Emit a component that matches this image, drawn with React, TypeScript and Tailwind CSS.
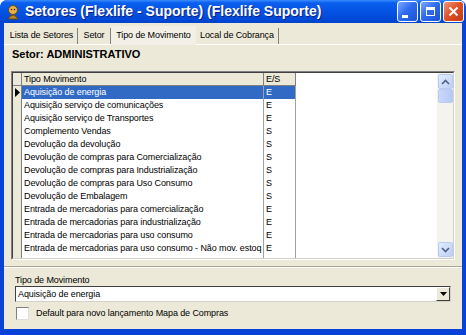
import React from 'react'

const rows: [string, string][] = [
  ['Aquisição de energia', 'E'],
  ['Aquisição serviço de comunicações', 'E'],
  ['Aquisição serviço de Transportes', 'E'],
  ['Complemento Vendas', 'S'],
  ['Devolução da devolução', 'S'],
  ['Devolução de compras para Comercialização', 'S'],
  ['Devolução de compras para Industrialização', 'S'],
  ['Devolução de compras para Uso Consumo', 'S'],
  ['Devolução de Embalagem', 'S'],
  ['Entrada de mercadorias para comercialização', 'E'],
  ['Entrada de mercadorias para industrialização', 'E'],
  ['Entrada de mercadorias para uso consumo', 'E'],
  ['Entrada de mercadorias para uso consumo - Não mov. estoq', 'E'],
]

const tabs: { label: string; w: string }[] = [
  { label: 'Lista de Setores', w: 'w-[72px]' },
  { label: 'Setor', w: 'w-[33px]' },
  { label: 'Tipo de Movimento', w: 'w-[85px]' },
  { label: 'Local de Cobrança', w: 'w-[83px]' },
]

function TitleButton({ kind }: { kind: 'min' | 'max' | 'close' }) {
  const bg =
    kind === 'close'
      ? 'bg-[linear-gradient(135deg,#f09a7c_0%,#e0532c_45%,#c7380f_100%)]'
      : 'bg-[linear-gradient(135deg,#7fa8ff_0%,#2e6cf0_45%,#1e52d6_100%)]'
  return (
    <div className={`w-[21px] h-[21px] rounded-[3px] border border-white flex items-center justify-center ${bg}`}>
      {kind === 'min' && <div className="w-[6px] h-[3px] bg-white mt-[9px] mr-[5px]" />}
      {kind === 'max' && <div className="w-[9px] h-[9px] border-white border-[1px] border-t-[3px]" />}
      {kind === 'close' && (
        <svg width="11" height="11" viewBox="0 0 11 11">
          <path d="M1.5 1.5 L9.5 9.5 M9.5 1.5 L1.5 9.5" stroke="white" strokeWidth="2" />
        </svg>
      )}
    </div>
  )
}

function ScrollButton({ up }: { up: boolean }) {
  return (
    <div className="w-[15px] h-[15px] rounded-[2px] border border-[#b7cbf5] bg-[linear-gradient(135deg,#e2ebfe,#bcd0f7)] flex items-center justify-center">
      <svg width="9" height="6" viewBox="0 0 9 6">
        <path d={up ? 'M1 5 L4.5 1.5 L8 5' : 'M1 1 L4.5 4.5 L8 1'} stroke="#4d6185" strokeWidth="1.6" fill="none" />
      </svg>
    </div>
  )
}

export default function App() {
  return (
    <div
      className="w-[466px] h-[335px] bg-[#0842d7] flex flex-col text-[9px] tracking-[-0.1px] text-black overflow-hidden rounded-t-[7px]"
      style={{ fontFamily: '"Liberation Sans", Arial, sans-serif' }}
    >
      {/* Title bar */}
      <div className="h-[23px] shrink-0 flex items-center pl-[5px] pr-[2px] bg-[linear-gradient(180deg,#3a8cff_0%,#0a5fef_12%,#0553e3_50%,#0148d6_88%,#0042c8_100%)] rounded-t-[7px]">
        <svg width="16" height="16" viewBox="0 0 16 16" className="mr-[4px]">
          <circle cx="8" cy="6" r="4.5" fill="#e8b04a" stroke="#6b4a10" strokeWidth="1" />
          <path d="M3 15 Q8 7 13 15 Z" fill="#b8862c" stroke="#6b4a10" strokeWidth="1" />
          <circle cx="6.5" cy="5.5" r="0.8" fill="#333" />
          <circle cx="9.5" cy="5.5" r="0.8" fill="#333" />
        </svg>
        <div className="text-white font-bold text-[14px] tracking-normal flex-1 [text-shadow:1px_1px_0_#0a1e80]">
          Setores (Flexlife - Suporte) (Flexlife Suporte)
        </div>
        <div className="flex gap-[2px]">
          <TitleButton kind="min" />
          <TitleButton kind="max" />
          <TitleButton kind="close" />
        </div>
      </div>

      {/* Client area */}
      <div className="flex-1 mx-[4px] mb-[6px] bg-[#ece9d8] flex flex-col">
        {/* Tabs */}
        <div className="flex items-end h-[21px] shrink-0 px-[2px]">
          {tabs.map((t, i) => {
            const active = i === 2
            return (
              <div
                key={t.label}
                className={
                  active
                    ? `${t.w} h-[19px] flex items-center justify-center whitespace-nowrap bg-[#f2f0e6] -mb-[1px] relative z-10`
                    : `${t.w} h-[16px] flex items-center justify-center whitespace-nowrap border-r border-[#808080]`
                }
              >
                {t.label}
              </div>
            )
          })}
        </div>
        <div className="border-t border-[#fff] h-[1px] shrink-0" />

        <div className="px-[8px] pt-[3px] font-bold text-[11px] leading-[13px] tracking-normal shrink-0">
          Setor: ADMINISTRATIVO
        </div>

        {/* Grid */}
        <div className="mx-[7px] mt-[10px] h-[189px] shrink-0 border border-t-[#808080] border-l-[#808080] border-r-white border-b-white">
          <div className="h-full border border-[#404040] border-r-[#d4d0c8] border-b-[#d4d0c8] bg-white flex">
            <div className="flex-1 flex flex-col">
              {/* header */}
              <div className="flex h-[13px] bg-[#ece9d8]">
                <div className="w-[9px] border-r border-[#808080] border-b" />
                <div className="w-[242px] pl-[2px] leading-[12px] border-r border-b border-[#808080]">Tipo Movimento</div>
                <div className="w-[32px] pl-[2px] leading-[12px] border-r border-b border-[#808080]">E/S</div>
                <div className="flex-1 bg-white" />
              </div>
              <div className="flex-1 flex">
                <div className="w-[9px] bg-[#ece9d8] border-r border-[#808080] flex flex-col">
                  <div className="h-[13px] flex items-center justify-center">
                    <svg width="5" height="9" viewBox="0 0 5 9">
                      <path d="M0 0 L5 4.5 L0 9 Z" fill="black" />
                    </svg>
                  </div>
                </div>
                <div className="w-[242px] border-r border-[#a0a0a0] flex flex-col">
                  {rows.map(([name], i) => (
                    <div
                      key={name}
                      className={`h-[13px] pl-[2px] leading-[13px] whitespace-nowrap overflow-hidden ${i === 0 ? 'bg-[#316ac5] text-white' : ''}`}
                    >
                      {name}
                    </div>
                  ))}
                </div>
                <div className="w-[32px] border-r border-[#a0a0a0] flex flex-col">
                  {rows.map(([name, es], i) => (
                    <div
                      key={name}
                      className={`h-[13px] pl-[2px] leading-[13px] ${i === 0 ? 'bg-[#316ac5] text-white' : ''}`}
                    >
                      {es}
                    </div>
                  ))}
                </div>
                <div className="flex-1" />
              </div>
            </div>
            {/* Scrollbar */}
            <div className="w-[16px] bg-[#f4f3ee] flex flex-col items-center pt-[1px] pb-[1px]">
              <ScrollButton up />
              <div className="w-[15px] h-[14px] rounded-[2px] border border-[#b7cbf5] bg-[linear-gradient(90deg,#c9d8fb,#b4c9f5)]" />
              <div className="flex-1" />
              <ScrollButton up={false} />
            </div>
          </div>
        </div>

        {/* Lower panel */}
        <div className="mt-[6px] border-t border-[#aca899] h-[1px] shrink-0" />
        <div className="border-t border-white h-[1px] shrink-0" />
        <div className="px-[11px] pt-[6px]">
          <div className="leading-[12px]">Tipo de Movimento</div>
          <div className="h-[16px] border border-[#404040] border-r-[#d4d0c8] border-b-[#d4d0c8] bg-white flex items-center">
            <div className="flex-1 pl-[2px] leading-[14px]">Aquisição de energia</div>
            <div className="w-[14px] h-[14px] bg-[#ece9d8] border border-t-white border-l-white border-r-[#404040] border-b-[#404040] flex items-center justify-center">
              <svg width="7" height="4" viewBox="0 0 7 4">
                <path d="M0 0 L7 0 L3.5 4 Z" fill="black" />
              </svg>
            </div>
          </div>
          <div className="mt-[5px] flex items-center">
            <div className="w-[13px] h-[13px] bg-white border border-[#808080] border-r-[#e0e0e0] border-b-[#e0e0e0] ml-[1px] mr-[7px]" />
            <span>Default para novo lançamento Mapa de Compras</span>
          </div>
        </div>
      </div>
    </div>
  )
}
